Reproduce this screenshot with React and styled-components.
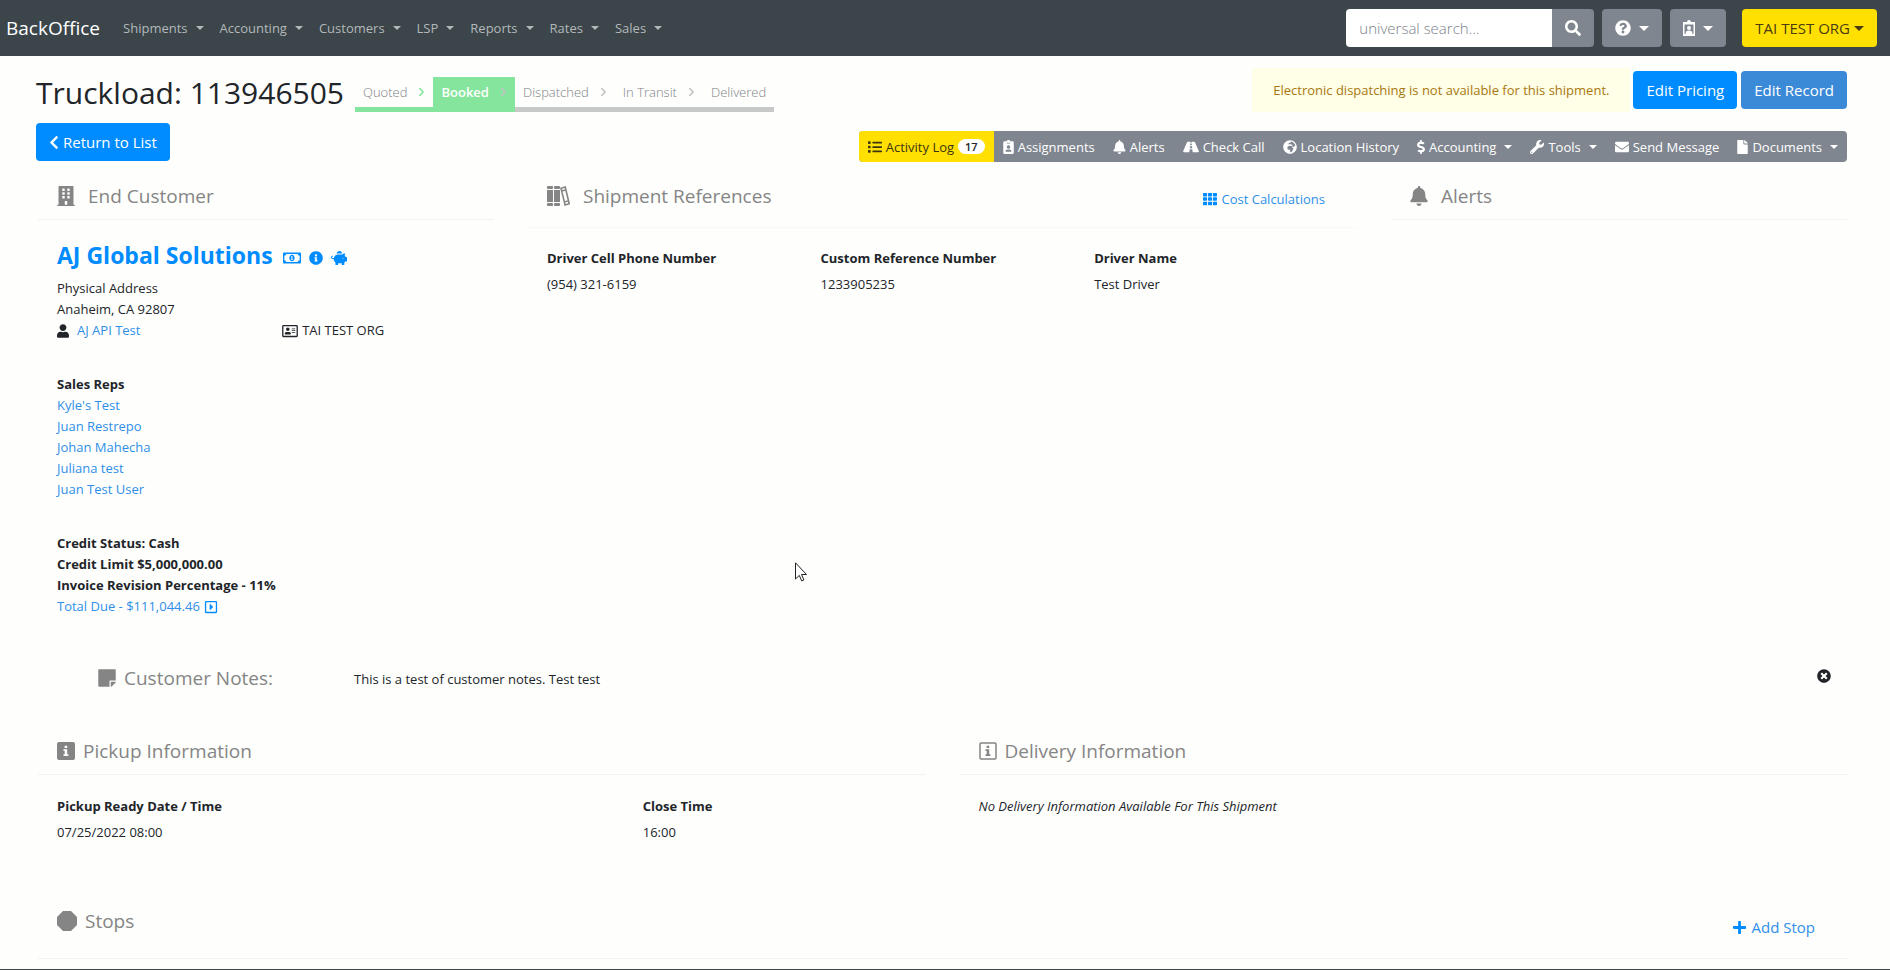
import React from 'react';
import styled, { createGlobalStyle, css } from 'styled-components';
import {
  FaBell,
  FaBuilding,
  FaChevronLeft,
  FaChevronRight,
  FaDollarSign,
  FaEnvelope,
  FaFile,
  FaGlobeAfrica,
  FaInfoCircle,
  FaList,
  FaPiggyBank,
  FaPlus,
  FaQuestionCircle,
  FaRegAddressCard,
  FaRegCaretSquareRight,
  FaRegMoneyBillAlt,
  FaRoad,
  FaSearch,
  FaStickyNote,
  FaTh,
  FaTimesCircle,
  FaUser,
  FaWrench,
} from 'react-icons/fa';

const GlobalStyle = createGlobalStyle`
  :root {
    --blue: #008cff;
    --link: #2f8fe8;
    --dark: #3b454a;
    --gray: #7f868f;
    --yellow: #ffe000;
    --green: #86e59c;
    --heading: #858585;
    --text: #212529;
    --line: #f2f3f3;
  }

  *, *::before, *::after {
    box-sizing: border-box;
  }

  body {
    margin: 0;
    background: #fefefd;
    color: var(--text);
    font: 400 13px/21px "Open Sans", "Noto Sans", sans-serif;
  }

  h1, h2, h3, p, ul, ol, dl, dd {
    margin: 0;
    padding: 0;
    list-style: none;
  }

  button, input {
    font-family: inherit;
  }

  svg {
    flex: none;
  }
`

const caret = css`
  &::after {
    content: '';
    margin-left: ${(props) => props.$caretGap || 8}px;
    border: ${(props) => props.$caret || 4}px solid transparent;
    border-top-color: currentColor;
    border-bottom: 0;
  }
`

const Navbar = styled.header`
  display: flex;
  align-items: center;
  height: 56px;
  padding: 0 13px 0 6px;
  background: var(--dark);
`

const Brand = styled.a`
  margin-right: 15px;
  color: #fff;
  font-size: 19px;
  text-decoration: none;
`

const Menu = styled.nav`
  display: flex;
  flex: 1;
`

const MenuItem = styled.button`
  display: flex;
  align-items: center;
  padding: 8px;
  border: 0;
  background: none;
  color: #b4b8ba;
  font-size: 13px;
  line-height: 21px;
  ${caret}
`

const Search = styled.form`
  display: flex;
  margin-right: 8px;
`

const SearchInput = styled.input`
  width: 206px;
  height: 38px;
  padding: 0 13px;
  border: 0;
  border-radius: 4px 0 0 4px;
  background: #fff;
  font-size: 15px;
  font-weight: 300;

  &::placeholder {
    color: #7b8188;
    opacity: 1;
  }
`

const SearchButton = styled.button`
  display: flex;
  align-items: center;
  justify-content: center;
  width: 42px;
  border: 0;
  border-radius: 0 4px 4px 0;
  background: var(--gray);
  color: #fff;
  font-size: 16px;
`

const Button = styled.button`
  display: inline-flex;
  align-items: center;
  justify-content: center;
  gap: 4px;
  height: 38px;
  padding: 0 13px;
  border: 0;
  border-radius: 4px;
  background: ${(props) => props.$bg || 'var(--blue)'};
  color: ${(props) => props.$color || '#fff'};
  font-size: 15px;
  white-space: nowrap;
`

const DropButton = styled(Button)`
  gap: 0;
  margin-left: ${(props) => props.$space || 8}px;
  font-size: ${(props) => props.$size || 16}px;
  ${caret}
`

const BackIcon = styled(FaChevronLeft)`
  width: 10px;
`

const Page = styled.main`
  padding: 12px 43px 0 36px;
`

const TitleRow = styled.div`
  display: flex;
  align-items: center;
  height: 44px;
`

const Title = styled.h1`
  margin-right: 11px;
  padding-top: 6px;
  font-size: 30px;
  font-weight: 400;
  line-height: 38px;
  white-space: nowrap;
`

const Tracker = styled.ol`
  display: flex;
  align-self: flex-end;
  flex: 1;
`

const Step = styled.li`
  display: flex;
  align-items: center;
  gap: 11px;
  height: 35px;
  padding: 0 8px;
  border-bottom: 5px solid ${(props) => (props.$done ? 'var(--green)' : '#c6c9c8')};
  background: ${(props) => (props.$current ? 'var(--green)' : 'none')};
  color: ${(props) => (props.$current ? '#fff' : '#7d8286')};
  font-weight: ${(props) => (props.$current ? 600 : 300)};

  svg {
    width: 7px;
    height: 10px;
    color: ${(props) => (props.$done && !props.$current ? 'var(--green)' : '#c0c4c3')};
  }
`

const Notice = styled.p`
  margin-right: 3px;
  padding: 12px 21px 11px;
  background: #fffee6;
  color: #a8780f;
  white-space: nowrap;
`

const TitleActions = styled.div`
  display: flex;
  gap: 4px;
`

const ToolRow = styled.div`
  display: flex;
  align-items: flex-start;
  justify-content: space-between;
  min-height: 39px;
  margin-top: 11px;
`

const Toolbar = styled.div`
  display: flex;
  align-self: flex-end;
  height: 31px;
  border-radius: 4px;
  background: var(--gray);
  overflow: hidden;
`

const Tool = styled.button`
  display: flex;
  align-items: center;
  gap: 4px;
  padding: 0 9px;
  border: 0;
  background: ${(props) => (props.$active ? 'var(--yellow)' : 'none')};
  color: ${(props) => (props.$active ? '#3d3413' : '#fff')};
  font-size: 13px;
  white-space: nowrap;

  svg {
    width: ${(props) => props.$icon || 14}px;
    height: 14px;
  }

  ${(props) => props.$menu && caret}
`

const Count = styled.span`
  padding: 0 7px;
  border-radius: 8px;
  background: #fff;
  color: var(--text);
  font-size: 11px;
  font-weight: 600;
  line-height: 15px;
`

const Columns = styled.div`
  display: grid;
  grid-template-columns: ${(props) => props.$tracks};
  gap: 34px;
  margin: ${(props) => props.$top}px 0 0 2px;
`

const PanelHead = styled.div`
  display: flex;
  align-items: flex-start;
  justify-content: space-between;
  padding: 11px 32px ${(props) => props.$bottom || 11}px 19px;
  border-bottom: 1px solid ${(props) => props.$line || 'var(--line)'};
`

const Heading = styled.h2`
  display: flex;
  align-items: center;
  gap: ${(props) => props.$gap || 8}px;
  color: var(--heading);
  font-size: 19px;
  font-weight: 400;
  line-height: 24px;

  svg[width="1em"] {
    width: 18px;
    height: 20px;
  }
`

const Link = styled.a`
  display: inline-flex;
  align-items: center;
  gap: 4px;
  color: var(--link);
  text-decoration: none;

  svg {
    color: var(--blue);
  }
`

const HeadLink = styled(Link)`
  margin-top: ${(props) => props.$drop}px;
  font-size: ${(props) => props.$size || 13}px;
  line-height: 24px;
`

const Customer = styled.div`
  padding: 19px 20px 0 19px;
`

const CustomerName = styled.h3`
  display: flex;
  align-items: center;
  gap: 10px;
  margin-bottom: 7px;
  color: var(--blue);
  font-size: 23px;
  font-weight: 700;
  line-height: 32px;

  a {
    color: inherit;
    text-decoration: none;
  }
`

const NameIcons = styled.span`
  display: flex;
  align-items: center;
  gap: 8px;
  padding-top: 5px;
  font-size: 14px;
`

const Contacts = styled.div`
  display: grid;
  grid-template-columns: 54% 1fr;
`

const Contact = styled.span`
  display: flex;
  align-items: center;
  gap: ${(props) => props.$gap || 4}px;

  svg {
    width: ${(props) => props.$icon || 16}px;
    height: 14px;
  }
`

const Block = styled.div`
  display: flex;
  flex-direction: column;
  align-items: flex-start;
  margin-top: 33px;

  strong {
    font-weight: 700;
  }
`

const Fields = styled.dl`
  display: grid;
  grid-template-columns: ${(props) => props.$tracks};
  padding-top: ${(props) => props.$top}px;

  > div {
    padding-left: 19px;
  }

  dt {
    margin-bottom: 5px;
    font-weight: 700;
  }
`

const Empty = styled.p`
  padding: 21px 19px 0;
  font-style: italic;
`

const Notes = styled.section`
  display: flex;
  align-items: flex-start;
  margin: 49px 16px 0 62px;

  p {
    flex: 1;
    padding-top: 3px;
  }
`

const NotesTitle = styled(Heading)`
  width: 256px;
`

const CloseButton = styled.button`
  display: flex;
  padding: 3px 0 0;
  border: 0;
  background: none;
  color: var(--text);
  font-size: 14px;
`

const Stops = styled.section`
  margin: 55px 0 0 2px;
`

const Footer = styled.footer`
  height: 1px;
  margin-top: 10px;
  background: var(--dark);
`

const Cursor = styled.svg`
  position: absolute;
  top: 562px;
  left: 795px;
`

const BadgeIcon = () => (
  <svg viewBox="0 0 12 16" fill="currentColor" aria-hidden="true">
    <path
      fillRule="evenodd"
      d="M4 1.5C4 .7 4.900 0 6 0s2 .7 2 1.500h2.500A1.500 1.500 0 0 1 12 3v11.500a1.500 1.500 0 0 1-1.500 1.500h-9A1.500 1.500 0 0 1 0 14.500V3a1.500 1.500 0 0 1 1.500-1.500zM6 6a2 2 0 1 0 0 4 2 2 0 0 0 0-4zM2.500 13.500h7c0-1.700-1.200-2.600-2.500-2.600H5c-1.300 0-2.500.9-2.500 2.600zM4 3v1h4V3z"
    />
  </svg>
)

const PortraitIcon = () => (
  <svg width="12" height="16" viewBox="0 0 12 16" fill="currentColor" aria-hidden="true">
    <path fillRule="evenodd" d="M4 2c0-1.200.9-2 2-2s2 .8 2 2h4v14H0V2zM1.500 4.500v9.500h9V4.500z" />
    <circle cx="6" cy="8" r="2" />
    <path d="M2.500 14c0-2.500 1.200-3.500 3.500-3.500s3.500 1 3.500 3.500z" />
  </svg>
)

const BooksIcon = () => (
  <svg width="23" height="20" viewBox="0 0 23 20" fill="currentColor" aria-hidden="true">
    <rect x="0" y="0" width="6" height="3" rx="1" />
    <rect x="0" y="4" width="6" height="12" />
    <rect x="0" y="17" width="6" height="3" rx="1" />
    <rect x="7" y="0" width="6" height="3" rx="1" />
    <rect x="7" y="4" width="6" height="12" />
    <rect x="7" y="17" width="6" height="3" rx="1" />
    <path d="M14 2.200l4.200-1.100 4 16.600-4.100 1.200z" fill="none" stroke="currentColor" strokeWidth="1.600" />
    <path d="M14.500 5l4-1M17.300 15.800l4-1" stroke="currentColor" strokeWidth="1.300" />
  </svg>
)

const InfoSquare = ({ outline }) => (
  <svg width="18" height="18" viewBox="0 0 18 18" fill="currentColor" aria-hidden="true">
    {outline ? (
      <rect x="1" y="1" width="16" height="16" rx="1" fill="none" stroke="currentColor" strokeWidth="1.500" />
    ) : (
      <rect width="18" height="18" rx="2" />
    )}
    <path
      fill={outline ? 'currentColor' : '#fefefd'}
      d="M7.600 3.700h2.600v2.400H7.600zM6.500 7.300h3.700v5h1.200v1.700H6.500v-1.700h1.200V9H6.500z"
    />
  </svg>
)

const Octagon = () => (
  <svg width="20" height="20" viewBox="0 0 20 20" fill="currentColor" aria-hidden="true">
    <path d="M6 0h8l6 6v8l-6 6H6l-6-6V6z" />
  </svg>
)

const menu = ['Shipments', 'Accounting', 'Customers', 'LSP', 'Reports', 'Rates', 'Sales']

const steps = [
  { name: 'Quoted', done: true },
  { name: 'Booked', done: true, current: true },
  { name: 'Dispatched' },
  { name: 'In Transit' },
  { name: 'Delivered' },
]

const tools = [
  { name: 'Assignments', icon: BadgeIcon, width: 11 },
  { name: 'Alerts', icon: FaBell, width: 13 },
  { name: 'Check Call', icon: FaRoad, width: 16 },
  { name: 'Location History', icon: FaGlobeAfrica },
  { name: 'Accounting', icon: FaDollarSign, width: 8, menu: true },
  { name: 'Tools', icon: FaWrench, menu: true },
  { name: 'Send Message', icon: FaEnvelope },
  { name: 'Documents', icon: FaFile, width: 11, menu: true },
]

const references = [
  ['Driver Cell Phone Number', '(954) 321-6159'],
  ['Custom Reference Number', '1233905235'],
  ['Driver Name', 'Test Driver'],
]

const pickup = [
  ['Pickup Ready Date / Time', '07/25/2022 08:00'],
  ['Close Time', '16:00'],
]

const salesReps = ["Kyle's Test", 'Juan Restrepo', 'Johan Mahecha', 'Juliana test', 'Juan Test User']

const FieldList = ({ items, tracks, top }) => (
  <Fields $tracks={tracks} $top={top}>
    {items.map(([label, value]) => (
      <div key={label}>
        <dt>{label}</dt>
        <dd>{value}</dd>
      </div>
    ))}
  </Fields>
)

const App = () => {
  return (
    <>
      <GlobalStyle />
      <Navbar>
        <Brand href="#">BackOffice</Brand>
        <Menu>
          {menu.map((name) => (
            <MenuItem key={name}>{name}</MenuItem>
          ))}
        </Menu>
        <Search>
          <SearchInput type="text" placeholder="universal search..." aria-label="universal search" />
          <SearchButton type="button" aria-label="Search"><FaSearch /></SearchButton>
        </Search>
        <DropButton $bg="var(--gray)" $space="0" $caret={5} aria-label="Help"><FaQuestionCircle /></DropButton>
        <DropButton $bg="var(--gray)" $caret={5} aria-label="Profile"><PortraitIcon /></DropButton>
        <DropButton $bg="var(--yellow)" $color="#4a3b12" $space="16" $size="15" $caret={5} $caretGap={4}>
          TAI TEST ORG
        </DropButton>
      </Navbar>

      <Page>
        <TitleRow>
          <Title>Truckload: 113946505</Title>
          <Tracker>
            {steps.map((step, i) => (
              <Step key={step.name} $done={step.done} $current={step.current}>
                {step.name}
                {i < steps.length - 1 && <FaChevronRight />}
              </Step>
            ))}
          </Tracker>
          <Notice>Electronic dispatching is not available for this shipment.</Notice>
          <TitleActions>
            <Button>Edit Pricing</Button>
            <Button $bg="#3b8ad8">Edit Record</Button>
          </TitleActions>
        </TitleRow>

        <ToolRow>
          <Button><BackIcon />Return to List</Button>
          <Toolbar>
            <Tool $active>
              <FaList /> Activity Log <Count>17</Count>
            </Tool>
            {tools.map(({ name, icon: Icon, width, menu }) => (
              <Tool key={name} $icon={width} $menu={menu} $caretGap={4}><Icon />{name}</Tool>
            ))}
          </Toolbar>
        </ToolRow>

        <Columns $tracks="11fr 20fr 11fr" $top={11}>
          <section>
            <PanelHead>
              <Heading $gap={13}><FaBuilding />End Customer</Heading>
            </PanelHead>
            <Customer>
              <CustomerName>
                <a href="#">AJ Global Solutions</a>
                <NameIcons>
                  <FaRegMoneyBillAlt size={18} />
                  <FaInfoCircle />
                  <FaPiggyBank size={16} />
                </NameIcons>
              </CustomerName>
              <p>Physical Address</p>
              <p>Anaheim, CA 92807</p>
              <Contacts>
                <Contact $gap={8} $icon={12}><FaUser /><Link href="#">AJ API Test</Link></Contact>
                <Contact><FaRegAddressCard />TAI TEST ORG</Contact>
              </Contacts>
              <Block>
                <strong>Sales Reps</strong>
                {salesReps.map((rep) => (
                  <Link key={rep} href="#">{rep}</Link>
                ))}
              </Block>
              <Block>
                <strong>Credit Status: Cash</strong>
                <strong>Credit Limit $5,000,000.00</strong>
                <strong>Invoice Revision Percentage - 11%</strong>
                <Link href="#">Total Due - $111,044.46 <FaRegCaretSquareRight size={14} /></Link>
              </Block>
            </Customer>
          </section>

          <section>
            <PanelHead $bottom={16} $line="#f8f9fb">
              <Heading $gap={13}><BooksIcon />Shipment References</Heading>
              <HeadLink href="#" $drop={3}><FaTh size={14} />Cost Calculations</HeadLink>
            </PanelHead>
            <FieldList items={references} tracks="repeat(3, 33%)" top={20} />
          </section>

          <section>
            <PanelHead>
              <Heading $gap={13}><FaBell />Alerts</Heading>
            </PanelHead>
          </section>
        </Columns>

        <Notes>
          <NotesTitle><FaStickyNote />Customer Notes:</NotesTitle>
          <p>This is a test of customer notes. Test test</p>
          <CloseButton aria-label="Close notes"><FaTimesCircle /></CloseButton>
        </Notes>

        <Columns $tracks="1fr 1fr" $top={38}>
          <section>
            <PanelHead>
              <Heading><InfoSquare />Pickup Information</Heading>
            </PanelHead>
            <FieldList items={pickup} tracks="66% 34%" top={21} />
          </section>
          <section>
            <PanelHead>
              <Heading><InfoSquare outline />Delivery Information</Heading>
            </PanelHead>
            <Empty>No Delivery Information Available For This Shipment</Empty>
          </section>
        </Columns>

        <Stops>
          <PanelHead $bottom={19}>
            <Heading><Octagon />Stops</Heading>
            <HeadLink href="#" $drop={6} $size={15}><FaPlus />Add Stop</HeadLink>
          </PanelHead>
        </Stops>
      </Page>
      <Footer />

      <Cursor width="12" height="20" viewBox="0 0 12 20" aria-hidden="true">
        <path
          d="M.500.800v16.200l3.800-3.600 2.400 5.500 2.200-1-2.400-5.400h5z"
          fill="#fff"
          stroke="#222"
        />
      </Cursor>
    </>
  )
}

export default App;
